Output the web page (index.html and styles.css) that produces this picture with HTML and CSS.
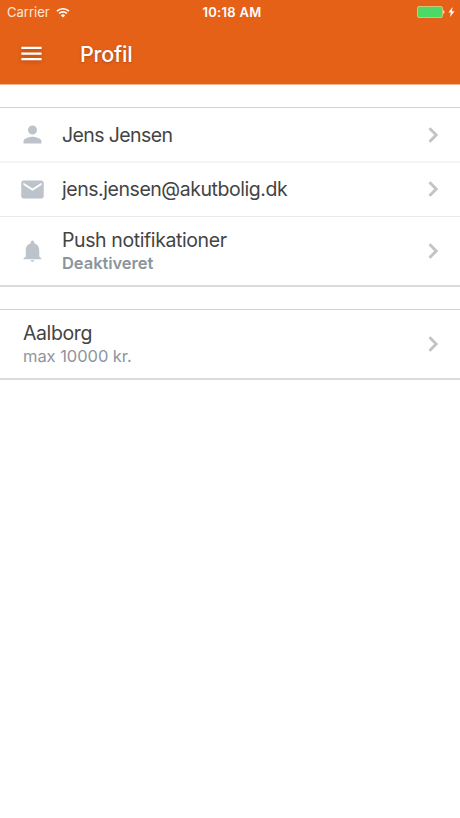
FILE: index.html
```html
<!doctype html>
<html lang="da">
<head>
	<title>Profil</title>
	<meta charset="utf-8" />
	<link rel="stylesheet" href="styles.css">
</head>
<body>
	<header class="header">
		<div class="statusbar">
			<div class="carrier">
				<span>Carrier</span>
				<svg class="wifi" viewBox="0 0 14 11">
					<path d="M1 4.2a8.6 8.6 0 0 1 12 0M3.1 6.5a5.6 5.6 0 0 1 7.8 0" />
					<path class="dot" d="M7 10.6L4.9 8.4a3 3 0 0 1 4.2 0z" />
				</svg>
			</div>
			<div class="time">10:18 AM</div>
			<div class="power">
				<svg class="battery" viewBox="0 0 28 12">
					<rect class="level" x=".5" y=".5" width="25" height="11" rx="1.5" />
					<path class="tip" d="M26.3 4c1.5.6 1.5 3.4 0 4z" />
				</svg>
				<svg class="bolt" viewBox="0 0 7 10">
					<path d="M4.6 0L.4 5.6h2.5L2 10l4.5-5.8H3.9z" />
				</svg>
			</div>
		</div>
		<div class="navbar">
			<svg class="icon" viewBox="0 0 24 24"><path d="M3 18h18v-2H3v2zm0-5h18v-2H3v2zm0-7v2h18V6H3z" /></svg>
			<h1 class="title">Profil</h1>
		</div>
	</header>

	<ul class="list">
		<li class="item">
			<svg class="icon" viewBox="0 0 24 24"><path d="M12 12c2.21 0 4-1.79 4-4s-1.79-4-4-4-4 1.79-4 4 1.79 4 4 4zm0 2c-2.67 0-8 1.34-8 4v2h16v-2c0-2.66-5.33-4-8-4z" /></svg>
			<div class="label"><span class="name">Jens Jensen</span></div>
			<svg class="chevron" viewBox="0 0 24 24"><path d="M10 6L8.59 7.41 13.17 12l-4.58 4.59L10 18l6-6z" /></svg>
		</li>
		<li class="item email">
			<svg class="icon" viewBox="0 0 24 24"><path d="M20 4H4c-1.1 0-1.99.9-1.99 2L2 18c0 1.1.9 2 2 2h16c1.1 0 2-.9 2-2V6c0-1.1-.9-2-2-2zm0 4l-8 5-8-5V6l8 5 8-5v2z" /></svg>
			<div class="label"><span>jens.jensen@akutbolig.dk</span></div>
			<svg class="chevron" viewBox="0 0 24 24"><path d="M10 6L8.59 7.41 13.17 12l-4.58 4.59L10 18l6-6z" /></svg>
		</li>
		<li class="item tall">
			<svg class="icon" viewBox="0 0 24 24"><path d="M12 21.2c1 0 1.7-.6 1.7-1.4h-3.4c0 .8.7 1.4 1.7 1.4zm6-4.8v-5.4c0-3.07-1.64-5.64-4.5-6.32V3.7c0-.83-.67-1.5-1.5-1.5s-1.5.67-1.5 1.5v.98C7.63 5.36 6 7.92 6 11v5.4l-2 1.8v.8h16v-.8l-2-1.8z" /></svg>
			<div class="label">
				<span>Push notifikationer</span>
				<span class="sub status">Deaktiveret</span>
			</div>
			<svg class="chevron" viewBox="0 0 24 24"><path d="M10 6L8.59 7.41 13.17 12l-4.58 4.59L10 18l6-6z" /></svg>
		</li>
	</ul>

	<ul class="list">
		<li class="item tall">
			<div class="label">
				<span>Aalborg</span>
				<span class="sub">max 10000 kr.</span>
			</div>
			<svg class="chevron" viewBox="0 0 24 24"><path d="M10 6L8.59 7.41 13.17 12l-4.58 4.59L10 18l6-6z" /></svg>
		</li>
	</ul>
</body>
</html>
```

FILE: styles.css
```css
* {
	box-sizing: border-box;
}

body {
	margin: 0;
	background-color: #fff;
	color: #444;
	font-family: Inter, "Liberation Sans", sans-serif;
}

svg {
	display: block;
	flex: none;
}

.header {
	height: 84px;
	margin-bottom: 23px;
	background-color: #e66118;
	color: #fff;
	box-shadow: 0 1px 0 #f3b590;
}

.statusbar {
	display: grid;
	grid-template-columns: 1fr auto 1fr;
	align-items: center;
	height: 24px;
	padding: 0 5px 0 7px;
	font-size: 13px;
	line-height: 16px;
}

.carrier {
	display: flex;
	align-items: center;
	gap: 6px;
	color: #fde6d6;
}

.wifi {
	width: 14px;
	height: 11px;
	fill: none;
	stroke: #fff;
	stroke-width: 1.7;
}

.wifi .dot {
	fill: #fff;
	stroke: none;
}

.time {
	padding-left: 2px;
	font-weight: 600;
	letter-spacing: .3px;
}

.power {
	display: flex;
	align-items: center;
	justify-content: flex-end;
	gap: 3px;
}

.battery {
	width: 28px;
	height: 12px;
}

.level {
	fill: #4cd964;
	stroke: #d6c17c;
}

.tip, .bolt {
	fill: #fff;
}

.bolt {
	width: 7px;
	height: 10px;
}

.icon {
	width: 27px;
	height: 27px;
	fill: #bdc3ca;
}

.navbar {
	display: flex;
	align-items: center;
	height: 59px;
	padding: 0 18px;
}

.navbar .icon {
	fill: #fff;
	filter: drop-shadow(0 1px 2px rgba(0, 0, 0, .25));
}

.title {
	margin: 0 0 0 35px;
	font-size: 21.5px;
	font-weight: 500;
	letter-spacing: -.2px;
	line-height: 28px;
	text-shadow: 0 1px 3px rgba(0, 0, 0, .25);
}

.list {
	list-style: none;
	margin: 0 0 22px;
	padding: 0;
	border-top: 1px solid #d0d4d6;
	border-bottom: 2px solid #d9dadb;
}

.item {
	display: flex;
	align-items: center;
	height: 53px;
	padding: 0 12px 0 19px;
}

.item + .item {
	border-top: 1px solid #ebebeb;
}

.item.email {
	height: 55px;
	padding-bottom: 1px;
	border-top: 2px solid #f4f4f4;
}

.item.tall {
	height: 68px;
}

.item + .item.tall {
	height: 69px;
}

.label {
	display: flex;
	flex-direction: column;
	flex: 1;
	padding-left: 4px;
	font-size: 19.5px;
	letter-spacing: -.4px;
	line-height: 24px;
}

.icon + .label {
	padding-left: 16px;
}

.name {
	padding-top: 1px;
	letter-spacing: -.6px;
}

.email .label {
	letter-spacing: -.45px;
}

.sub {
	color: #8e949e;
	font-size: 16.5px;
	letter-spacing: -.05px;
	line-height: 22px;
}

.status {
	color: #8b959c;
	font-weight: 600;
}

.chevron {
	width: 30px;
	height: 30px;
	fill: #c2c3c5;
	stroke: #c2c3c5;
	stroke-width: .4;
}
```
